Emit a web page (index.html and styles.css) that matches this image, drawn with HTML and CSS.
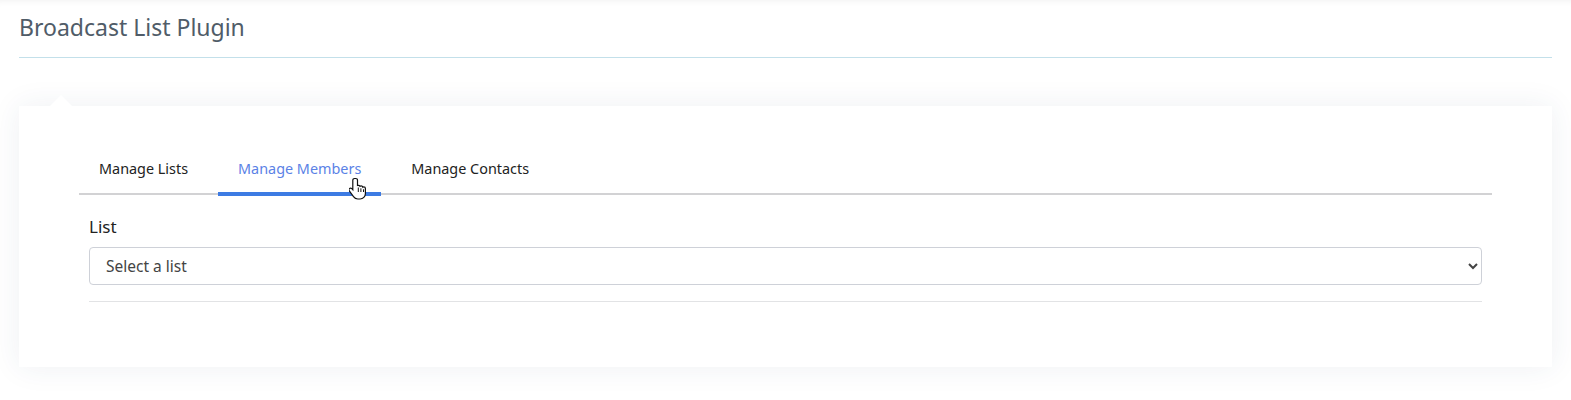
FILE: index.html
```html
<!DOCTYPE html>
<html lang="en">
<head>
    <meta charset="UTF-8">
    <meta name="viewport" content="width=device-width, initial-scale=1.0">
    <title>Broadcast List Plugin</title>
    <link rel="stylesheet" href="styles.css">
</head>
<body>
    <div class="page">
        <!-- Header -->
        <div class="header">
            <h1>Broadcast List Plugin</h1>
        </div>

        <!-- Plugin Card -->
        <div class="card">
            <div class="tabs">
                <a href="#" class="tab">Manage Lists</a>
                <a href="#" class="tab active">Manage Members</a>
                <a href="#" class="tab">Manage Contacts</a>
                <svg class="cursor" width="18" height="24" viewBox="0 0 18 24">
                    <path d="M5.5 1.5c-1 0-1.7.8-1.7 1.7v9.6l-1-1.1c-.7-.7-1.8-.7-2.4 0-.6.6-.6 1.5-.1 2.2l4.2 5.8c1 1.4 2.5 2.3 4.3 2.3h2.3c2.9 0 5.3-2.4 5.3-5.3v-5.2c0-.9-.7-1.6-1.6-1.6-.4 0-.7.1-1 .3-.2-.8-.9-1.3-1.7-1.3-.4 0-.8.1-1.1.4-.3-.6-.9-1-1.6-1-.3 0-.6.1-.9.2V3.2c0-.9-.7-1.7-1.7-1.7z" fill="#fff" stroke="#111" stroke-width="1.2"/>
                    <path d="M9.3 10.5v4.5M11.9 11.3v3.7M14.5 12.3v2.7" stroke="#111" stroke-width="1"/>
                </svg>
            </div>

            <div class="tab-content">
                <label for="list">List</label>
                <select id="list" class="form-select">
                    <option>Select a list</option>
                </select>
                <hr>
            </div>
        </div>
    </div>
</body>
</html>
```

FILE: styles.css
```css
/* General Styles */
body {
    font-family: 'Noto Sans', 'Open Sans', sans-serif;
    margin: 0;
    padding: 0;
    background-color: #ffffff;
    color: #222;
}

.page {
    padding: 0 19px 40px;
    box-shadow: inset 0 6px 6px -5px rgba(0, 0, 0, 0.06);
}

/* Header Styles */
.header {
    height: 57px;
    border-bottom: 1px solid #c3e0ea;
    display: flex;
    align-items: flex-start;
}

.header h1 {
    margin: 11px 0 0;
    font-size: 23px;
    line-height: 32px;
    font-weight: 400;
    color: #505c68;
}

/* Card Styles */
.card {
    position: relative;
    margin-top: 48px;
    background-color: #ffffff;
    padding: 38px 60px 65px;
    box-shadow: 0 0 28px rgba(40, 70, 100, 0.08);
}

.card::before {
    content: "";
    position: absolute;
    top: -11px;
    left: 31px;
    border-left: 11px solid transparent;
    border-right: 11px solid transparent;
    border-bottom: 11px solid #ffffff;
}

/* Tabs */
.tabs {
    position: relative;
    display: flex;
    gap: 10px;
    border-bottom: 2px solid #d2d2d4;
}

.tab {
    padding: 15px 20px 13px;
    font-size: 14.4px;
    line-height: 20px;
    color: #222;
    text-decoration: none;
    border-bottom: 4px solid transparent;
    margin-bottom: -3px;
}

.tab.active {
    color: #5b82e6;
    border-bottom-color: #3d7be3;
}

.cursor {
    position: absolute;
    left: 270px;
    top: 33px;
}

/* Tab Content */
.tab-content {
    padding: 20px 10px 0;
}

.tab-content label {
    display: block;
    font-size: 17px;
    line-height: 24px;
    color: #222;
    margin-bottom: 8px;
}

.form-select {
    display: block;
    width: 100%;
    height: 38px;
    padding: 0 12px;
    font-family: inherit;
    font-size: 15.5px;
    color: #444;
    background-color: #fff;
    border: 1px solid #ced1d8;
    border-radius: 4px;
}

.tab-content hr {
    margin: 16px 0 0;
    border: none;
    border-top: 1px solid #e2e3e5;
}
```
